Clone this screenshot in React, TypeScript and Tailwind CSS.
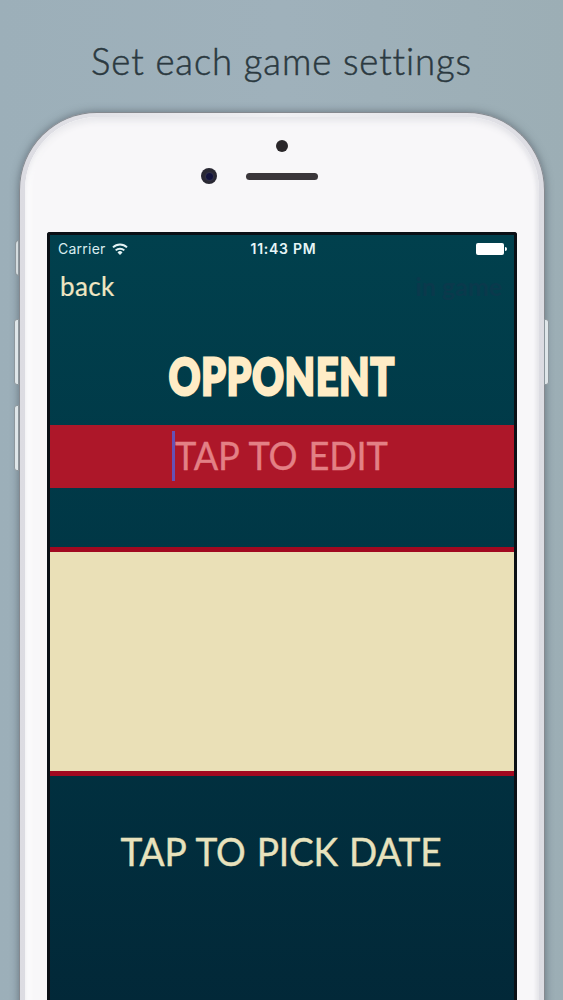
const LATO = "font-['Lato','Open_Sans',sans-serif]";

function WifiIcon() {
  return (
    <svg viewBox="0 0 16 12" className="h-3 w-4" fill="none" stroke="#e4f3f5" strokeWidth="2">
      <path d="M1 4.4a10 10 0 0 1 14 0" />
      <path d="M3.7 7.4a6.2 6.2 0 0 1 8.6 0" />
      <path d="M8 11.9 5.5 9.4a3.5 3.5 0 0 1 5 0z" fill="#e4f3f5" stroke="none" />
    </svg>
  );
}

function StatusBar() {
  return (
    <div className="grid h-[27px] grid-cols-3 items-center pl-2 pr-[7px] font-['Inter',sans-serif] text-[14px] text-[#d9edf0]">
      <div className="flex items-center gap-[6px]">
        <span className="tracking-[0.25px]">Carrier</span>
        <WifiIcon />
      </div>
      <span className="pl-[2px] text-center font-semibold tracking-[0.75px] whitespace-nowrap text-[#e6f5f7]">11:43 PM</span>
      <div className="flex items-center justify-end gap-px">
        <div className="h-3 w-7 rounded-[2px] bg-white" />
        <div className="h-1 w-[2px] rounded-r-full bg-white" />
      </div>
    </div>
  );
}

function Screen() {
  return (
    <div className="flex h-[770px] flex-col bg-gradient-to-b from-[#01404d] via-[#003544] to-[#022838]">
      <StatusBar />

      <div className={`${LATO} flex h-[50px] items-center justify-between pr-3 pb-px pl-[10px] text-[26px]`}>
        <span className="tracking-[0.4px] text-[#f0e6c3] [-webkit-text-stroke:0.2px_#f0e6c3]">back</span>
        <span className="text-[25px] font-bold text-[#0a394c]">in game</span>
      </div>

      <div className="flex h-[113px] items-center justify-center pt-[13px]">
        <h1 className={`${LATO} origin-center scale-x-[0.75] text-[52px] leading-none font-black tracking-[1.3px] text-[#ffecc6] [-webkit-text-stroke:3px_#ffecc6]`}>
          OPPONENT
        </h1>
      </div>

      {/* Opponent field with the caret */}
      <div className="flex h-[63px] items-center justify-center bg-[#ad1729] pb-[2px] pl-[11px]">
        <div className="h-[50px] w-[3px] bg-[#6750b5]" />
        <span className={`${LATO} origin-left scale-x-[0.93] text-[39px] leading-none tracking-[-0.2px] whitespace-nowrap text-[#e38085] [word-spacing:2px] [-webkit-text-stroke:0.3px_#e38085]`}>
          TAP TO EDIT
        </span>
      </div>

      <div className="h-[59px]" />
      <div className="h-[229px] border-y-[5px] border-[#a10920] bg-[#eae0b7]" />

      <div className="flex h-[152px] items-center justify-center pr-[2px] pb-[2px]">
        <span className={`${LATO} scale-x-[0.95] text-[39px] leading-none tracking-[-0.2px] whitespace-nowrap text-[#e8e2bd] [word-spacing:2px] [-webkit-text-stroke:0.4px_#e8e2bd]`}>
          TAP TO PICK DATE
        </span>
      </div>
    </div>
  );
}

function Phone() {
  return (
    <div className="relative ml-[19px] h-[1000px] w-[526px] rounded-t-[78px] border border-b-0 border-[#85898f] bg-gradient-to-r from-[#dcdce2] via-[#f0f0f3] to-[#dcdce2] px-[5px] pt-[4px] shadow-[0_0_9px_rgba(65,75,85,0.6)]">
      {/* Side buttons */}
      <div className="absolute top-[127px] -left-[5px] h-[36px] w-[4px] rounded-l border border-[#8d979d] bg-[#d5dcdf]" />
      <div className="absolute top-[206px] -left-[6px] h-[66px] w-[5px] rounded-l-[3px] border border-[#8d979d] bg-[#dfe6e9]" />
      <div className="absolute top-[292px] -left-[6px] h-[66px] w-[5px] rounded-l-[3px] border border-[#8d979d] bg-[#dfe6e9]" />
      <div className="absolute top-[206px] -right-[5px] h-[66px] w-[5px] rounded-r-[3px] border border-[#8d979d] bg-[#dfe6e9]" />

      <div className="h-full rounded-t-[73px] bg-[#f8f7f9] px-[22px] shadow-[inset_0_4px_6px_#e6e6ea,inset_5px_0_4px_#fff,inset_-3px_0_3px_#e8e8ec]">
        <div className="flex h-[115px] flex-col items-center pt-[23px]">
          <div className="size-3 rounded-full bg-[#2a272a]" />
          <div className="mt-[16px] flex w-full items-center pl-[154px]">
            <div className="flex size-4 items-center justify-center rounded-full bg-[#292833]">
              <div className="size-[7px] rounded-full bg-[#12123b] shadow-[0_0_2px_#49497a]" />
            </div>
            <div className="ml-[29px] h-[7px] w-[72px] rounded-full bg-[#3a363a]" />
          </div>
        </div>
        <div className="rounded-t-[3px] border-[3px] border-b-0 border-[#0b1016]">
          <Screen />
        </div>
      </div>
    </div>
  );
}

export default function App() {
  return (
    <main className="h-[1000px] w-[563px] overflow-hidden bg-gradient-to-r from-[#9cafb9] via-[#9fb1bb] to-[#9caeb5]">
      <header className="flex h-[112px] items-center justify-center pt-[11px]">
        <p className="font-['Lato',sans-serif] text-[36.5px] leading-none font-light tracking-[0.9px] whitespace-nowrap text-[#2b3940] [font-variant-ligatures:none] [-webkit-text-stroke:0.5px_#2b3940]">
          Set each game settings
        </p>
      </header>
      <Phone />
    </main>
  );
}
